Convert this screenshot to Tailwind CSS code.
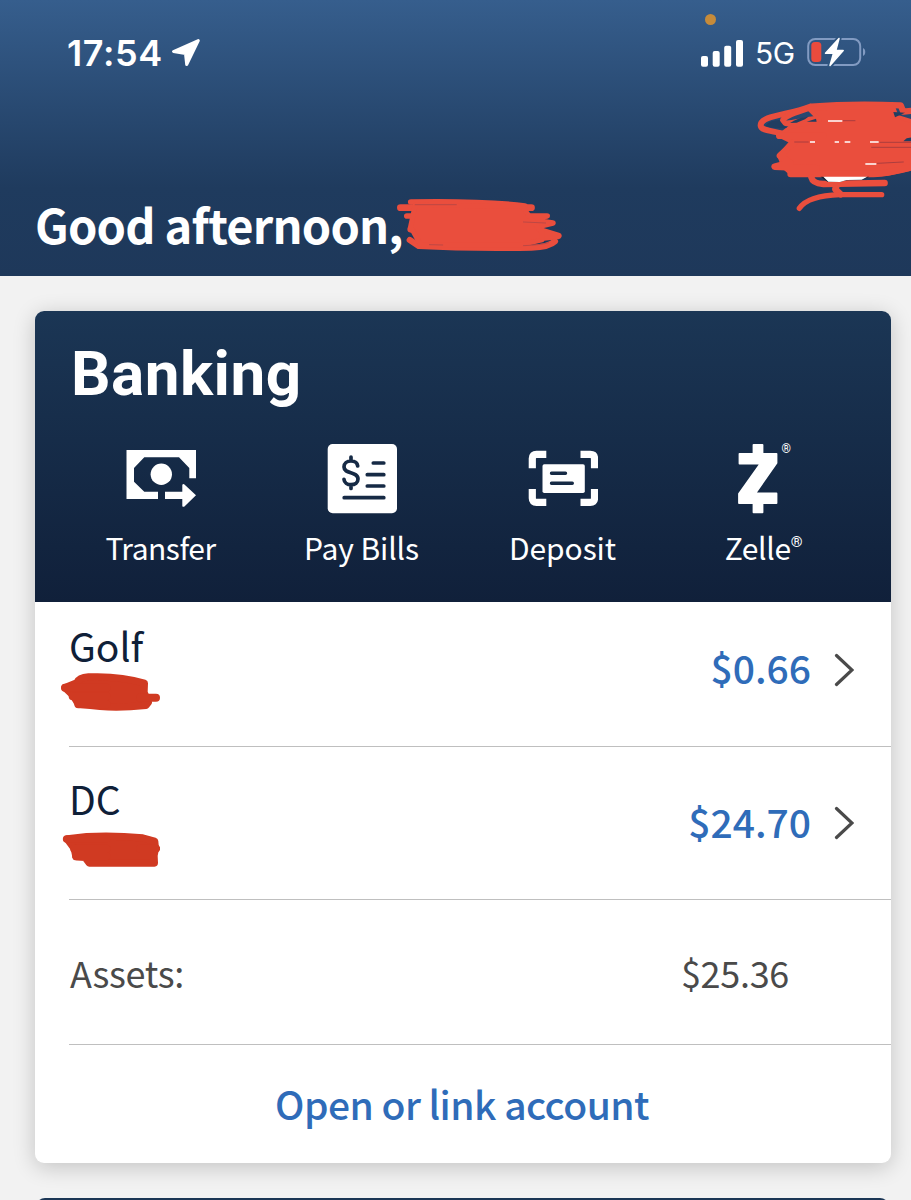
<!DOCTYPE html>
<html lang="en">
<head>
  <meta charset="UTF-8">
  <meta name="viewport" content="width=device-width, initial-scale=1.0">
  <title>Banking</title>
  <script src="https://cdn.jsdelivr.net/npm/@tailwindcss/browser@4"></script>
</head>
<body class="bg-[#f2f2f2] font-['Noto_Sans_CJK_SC','Roboto',sans-serif]">
<div class="relative w-[911px] h-[1200px] overflow-hidden">

  <!-- Header -->
  <header class="relative h-[276px] bg-linear-to-b from-[#365e8d] via-[#1f3b5e] via-68% to-[#1e385a] text-white">
    <span class="absolute left-[705px] top-[14px] size-[11px] rounded-full bg-[#c68b3a]"></span>

    <!-- Status bar -->
    <div class="flex items-center justify-between h-[106px] pl-[67px] pr-[45px]">
      <div class="flex items-center gap-[10px]">
        <span class="font-['Inter',sans-serif] font-semibold text-[36px] leading-[40px] w-[94px] tracking-[0.6px] whitespace-nowrap">17:54</span>
        <svg class="w-[30px] h-[30px]" viewBox="0 0 30 30" fill="#fff" stroke="#fff" stroke-width="3" stroke-linejoin="round"><path d="M27.3 2.5 2.5 13.5 14.500 15.5 15.7 26.5Z"/></svg>
      </div>
      <div class="flex items-center">
        <svg class="w-[44px] h-[28px]" viewBox="0 0 44 28" fill="#fff">
          <rect x="1" y="17" width="7" height="10.7" rx="2"/>
          <rect x="12.7" y="12" width="7" height="15.7" rx="2"/>
          <rect x="24.2" y="6.7" width="7" height="21" rx="2"/>
          <rect x="36" y="1" width="7" height="26.7" rx="2"/>
        </svg>
        <span class="font-['Inter',sans-serif] ml-[11px] w-[40px] text-[30px] leading-[32px] tracking-[-0.5px] whitespace-nowrap">5G</span>
        <svg class="ml-[11px] -mt-[2px] w-[60px] h-[32px]" viewBox="0 0 60 32">
          <rect x="2.2" y="3" width="52" height="26" rx="7" fill="none" stroke="#829bc2" stroke-width="2"/>
          <path d="M57 12c3 1.200 3 6.800 0 8z" fill="#829bc2"/>
          <rect x="5.300" y="6" width="10" height="20" rx="3.500" fill="#ea4b3d"/>
          <path d="M33 2.500 19.500 17.300h8L24 29.500 37.200 14.600H29.800Z" fill="#fff" stroke="#2f5580" stroke-width="5" stroke-linejoin="round"/>
          <path d="M33 2.500 19.500 17.300h8L24 29.500 37.200 14.600H29.800Z" fill="#fff" stroke="#fff" stroke-width="1.500" stroke-linejoin="round"/>
        </svg>
      </div>
    </div>

    <!-- Greeting -->
    <div class="flex pl-[35px] pt-[89px]">
      <h1 class="-mt-[1px] w-[362px] text-[47px] leading-[60px] font-bold whitespace-nowrap tracking-[-0.8px]">Good afternoon,</h1>
      <svg class="w-[170px] h-[60px]" viewBox="1054 45 476 180" preserveAspectRatio="none" fill="none" stroke="#ea4e3d" stroke-linecap="round" stroke-linejoin="round">
        <path d="M1064 83H1430" stroke-width="20"/>
        <path d="M1093 66C1200 64 1320 66 1412 78" stroke-width="17"/>
        <path d="M1082 108H1474L1420 118 1490 129 1440 142" stroke-width="17"/>
        <path d="M1093 148 1450 150 1505 168 1400 180" stroke-width="20"/>
        <path d="M1090 180 1115 198Q1250 206 1430 203 1480 201 1496 184" stroke-width="18"/>
        <path d="M1105 75 1405 80 1425 110 1460 158 1460 180 1400 195 1120 195 1092 140Z" fill="#ea4e3d" stroke-width="14"/>
        <path d="M1105 74 1220 74M1408 126 1470 129M1145 194 1182 195M1408 197Q1460 195 1478 188" stroke="#a84448" stroke-width="2"/>
      </svg>
    </div>

    <svg class="absolute right-0 top-[90px] w-[171px] h-[130px]" viewBox="0 0 513 390" fill="none" stroke="#ea4e3d" stroke-linecap="round" stroke-linejoin="round">
      <path d="M210 50C150 75 60 75 62 107 64 125 110 122 140 135" stroke-width="18"/>
      <path d="M215 52C170 66 120 82 130 96 138 107 180 92 230 86" stroke-width="17"/>
      <path d="M215 50Q330 40 482 46L490 65 520 62" stroke-width="19"/>
      <path d="M205 55 460 52 470 80 520 95V140L495 155 520 160V235L440 252 200 252 152 250 130 230 118 198 155 155 118 137 150 112 240 90Z" fill="#ea4e3d" stroke-width="12"/>
      <path d="M118 137H250M165 155 120 197 150 218 104 230 230 235M152 252H400Q450 250 520 230" stroke-width="20"/>
      <path d="M214 262Q218 280 250 282L434 279" stroke-width="19"/>
      <path d="M290 285 286 298 302 313" stroke-width="20"/>
      <path d="M425 314H300C240 316 195 330 178 355" stroke-width="16"/>
      <path d="M242 260Q310 263 388 260L365 270 320 270 300 276 262 275Z" fill="#14202f" stroke="none"/>
      <path d="M250 260H382L365 269 320 270 300 276 265 275Z" fill="#fff" stroke="none"/>
      <path d="M150 99Q180 80 205 80L195 88 170 98Z" fill="#203e61" stroke="none"/>
      <path d="M200 95 228 86 230 95Z" fill="#203e61" stroke="none"/>
      <path d="M75 108Q88 90 118 90L132 108 142 113Q106 118 75 108Z" fill="#203e61" stroke="none"/>
      <path d="M460 66 495 68 465 82Z" fill="#203e61" stroke="none"/>
      <path d="M500 145 515 142V154H490Z" fill="#203e61" stroke="none"/>
      <path d="M264 93H307M210 156H225M284 156H297M314 156H331M390 156H416M376 222H409" stroke="#fff" stroke-width="4" stroke-linecap="butt"/>
      <path d="M310 92H345M164 156H205M420 157H513M395 172H513M412 220 490 216" stroke="#8c3540" stroke-width="2"/>
    </svg>
  </header>

  <!-- Banking card -->
  <main class="mt-[35px] ml-[35px] w-[856px] h-[852px] rounded-[9px] overflow-hidden bg-white shadow-[0_4px_22px_rgba(0,0,0,0.2)]">
    <section class="h-[291px] pt-[27px] bg-linear-to-b from-[#1b3655] to-[#10203a] text-white">
      <h2 class="pl-[36px] font-['Roboto',sans-serif] text-[62px] leading-[72px] font-bold tracking-[0.5px]">Banking</h2>
      <div class="grid grid-cols-4 w-[804px] ml-[25px] pt-[34px] text-[30px] leading-[40px] tracking-[-0.1px]">
        <div class="flex flex-col items-center gap-[13px]">
          <svg class="size-[70px]" viewBox="0 0 70 70" fill="#fff">
            <path d="M.5 6H70V34.300H63.300V24L53 13.300H18.300L8 24V37.700L18.300 47.700H32V55H.5Z"/>
            <circle cx="35.300" cy="30.300" r="10.700"/>
            <path d="M39 47.700H56.300V40.800Q57.500 39.500 58.700 40.700L70 51.300 58.700 62.300Q57.500 63.300 56.300 62.300V55H39Z"/>
          </svg>
          <span class="tracking-[-0.5px]">Transfer</span>
        </div>
        <div class="flex flex-col items-center gap-[13px]">
          <svg class="size-[70px]" viewBox="0 0 70 70">
            <rect x=".7" width="69.300" height="69.300" rx="5" fill="#fff"/>
            <g fill="none" stroke="#162a45" stroke-width="3.700" stroke-linecap="round">
              <path d="M30.700 22C30.300 18.700 27.500 17 24 17 20 17 17 19.300 17 23 17 30.500 31 27 31 35 31 38.600 28 40.700 24 40.700 20.300 40.700 17.200 38.500 17 35.300M24 13V17M24 40.700V44.500"/>
              <path d="M46.300 19H56.800M40.300 30.700H56.800M40.300 42H56.800M17.200 53.700H56.800"/>
            </g>
          </svg>
          <span>Pay Bills</span>
        </div>
        <div class="flex flex-col items-center gap-[13px]">
          <svg class="size-[70px]" viewBox="0 0 70 70">
            <path d="M4.300 24.300V14.500Q4.300 10.300 8.500 10.300H18.300M52.500 10.300H62.300Q66.500 10.300 66.500 14.500V24.300M66.500 45V54.200Q66.500 58.400 62.300 58.400H52.500M18.300 58.400H8.500Q4.300 58.400 4.300 54.200V45" fill="none" stroke="#fff" stroke-width="7.200"/>
            <rect x="14.500" y="20.300" width="42.300" height="28.700" rx="1.800" fill="#fff"/>
            <path d="M23.500 29.300H37.500M23.500 39.200H44.300" stroke="#162a45" stroke-width="3.400" stroke-linecap="round"/>
          </svg>
          <span>Deposit</span>
        </div>
        <div class="flex flex-col items-center gap-[13px]">
          <div class="relative">
            <svg class="size-[70px]" viewBox="0 0 70 70" fill="#fff">
              <path d="M24.500 1H33.500V9.800H47.500V19L26.200 49.500H47.500V59H33.500V68.300H24.500V59H10V49.700L31.500 19.500H10.500V9.800H24.500Z" stroke="#fff" stroke-width="1.800" stroke-linejoin="round"/>
            </svg>
            <span class="absolute left-[53px] -top-[3px] font-['Roboto',sans-serif] text-[12px] leading-[16px]">®</span>
          </div>
          <span class="flex tracking-[-0.3px]">Zelle<span class="font-['Roboto',sans-serif] text-[15px] leading-[31px]">®</span></span>
        </div>
      </div>
    </section>

    <ul class="-mt-2 text-[39px] leading-[48px]">
      <li class="flex items-center justify-between h-[153px] ml-[34px] pr-[37px] border-b border-[#bfbfbf]">
        <div class="flex flex-col text-[#0f2038]">
          <span class="-mt-[4px] mb-[4px]">Golf</span>
          <svg class="-ml-[9px] w-[100px] h-[42px]" viewBox="60 187 300 126" fill="#d03a22" stroke="#d03a22" stroke-linecap="round" stroke-linejoin="round">
            <path d="M75 231 110 217Q118 200 145 199 240 195 313 218L312 245 325 275 318 284Q240 292 180 287L115 280 100 255Z" stroke-width="22"/>
            <path d="M75 231H200M98 257H200M115 281H200M300 261H348" stroke-width="24"/>
          </svg>
        </div>
        <div class="flex items-center gap-[23px]">
          <span class="-mt-[6px] font-medium text-[#2f6cb9]">$0.66</span>
          <svg class="w-[20px] h-[34px]" viewBox="0 0 20 34" fill="none" stroke="#4a4a4a" stroke-width="3.200" stroke-linecap="round"><path d="M2.500 2.500 18 17 2.500 31.500"/></svg>
        </div>
      </li>
      <li class="flex items-center justify-between h-[153px] ml-[34px] pr-[37px] border-b border-[#bfbfbf]">
        <div class="flex flex-col text-[#0f2038]">
          <span class="-mt-[4px] mb-[4px]">DC</span>
          <svg class="-ml-[9px] w-[100px] h-[42px]" viewBox="60 646 300 126" fill="#d03a22" stroke="#d03a22" stroke-linecap="round" stroke-linejoin="round">
            <path d="M82 685 140 678Q220 673 308 682L344 692 346 714 342 735 343 757H148L135 740 108 738 103 714Z" stroke-width="22"/>
            <path d="M80 685H200M102 714H200M108 737H200M300 714H349" stroke-width="23"/>
          </svg>
        </div>
        <div class="flex items-center gap-[23px]">
          <span class="-mt-[5px] font-medium text-[#2f6cb9]">$24.70</span>
          <svg class="w-[20px] h-[34px]" viewBox="0 0 20 34" fill="none" stroke="#4a4a4a" stroke-width="3.200" stroke-linecap="round"><path d="M2.500 2.500 18 17 2.500 31.500"/></svg>
        </div>
      </li>
      <li class="flex items-center justify-between h-[145px] ml-[34px] pl-px pr-[102px] border-b border-[#bfbfbf] text-[#4a4a4a] text-[36px] tracking-[-0.3px]">
        <span>Assets:</span>
        <span>$25.36</span>
      </li>
      <li class="flex items-center justify-center h-[118px] pb-[3px] pr-[2px] text-[39px] font-medium text-[#2f6cb9] tracking-[-0.55px]">
        <a href="#">Open or link account</a>
      </li>
    </ul>
  </main>

  <!-- Next card -->
  <div class="relative mt-[35px] ml-[36px] w-[853px] h-[40px] rounded-t-[9px] bg-[#1b3655]"></div>
</div>
</body>
</html>
